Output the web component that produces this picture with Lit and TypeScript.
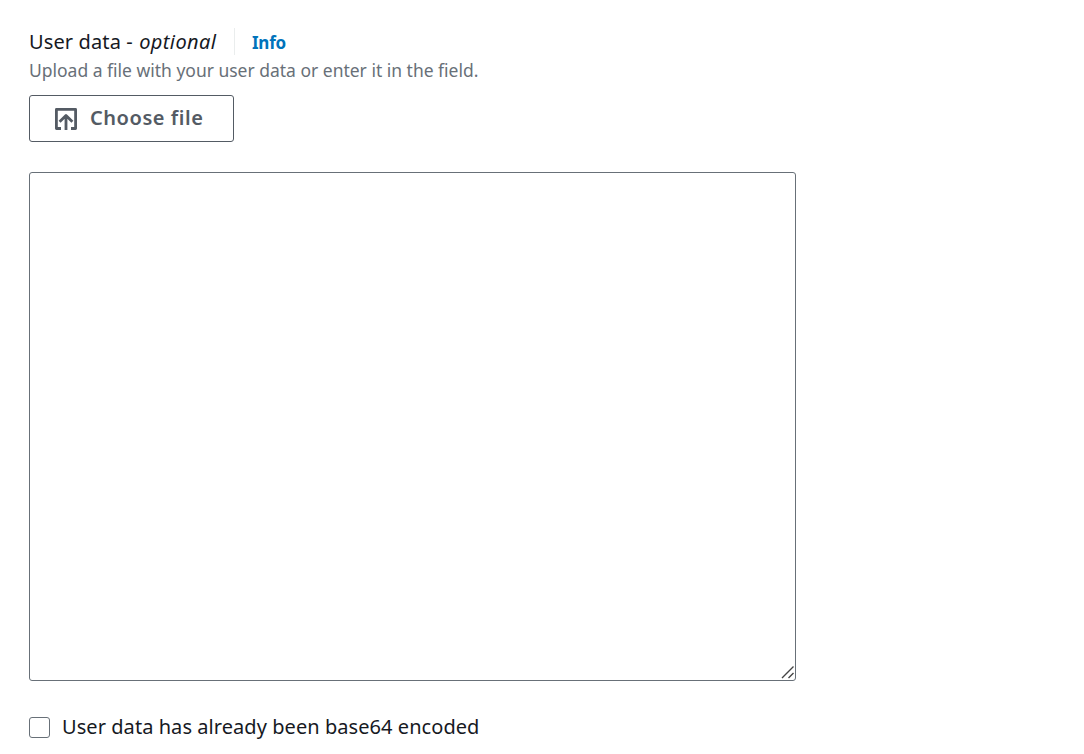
import { LitElement, html, css } from "lit";
import { customElement } from "lit/decorators.js";

@customElement("app-root")
export class AppRoot extends LitElement {
  static styles = css`
    :host {
      display: block;
      box-sizing: border-box;
      height: 754px;
      overflow: hidden;
      padding: 28px 0 0 29px;
      background: #fff;
      color: #16191f;
      font-family: "Noto Sans", "Open Sans", sans-serif;
      font-size: 20px;
      line-height: 28px;
    }
    * { box-sizing: border-box; }
    .heading { display: flex; height: 28px; white-space: pre; }
    .title { width: 205px; letter-spacing: 0.12px; }
    .optional { margin-left: 1px; letter-spacing: 0.4px; }
    .info {
      height: 27px;
      padding-left: 17px;
      border-left: 1px solid #eaeded;
      color: #0073bb;
      font-size: 17px;
      letter-spacing: -0.25px;
      font-weight: 700;
      line-height: 29px;
      text-decoration: none;
    }
    .hint {
      height: 28px;
      color: #687078;
      font-size: 17.5px;
      letter-spacing: -0.01px;
      line-height: 29px;
      white-space: nowrap;
    }
    .choose {
      display: flex;
      align-items: flex-start;
      width: 205px;
      height: 47px;
      margin: 11px 0 30px;
      padding: 0 0 0 25px;
      border: 1px solid #545b64;
      border-radius: 3px;
      background: #fff;
      color: #545b64;
      font: 600 20px/43px "Noto Sans", "Open Sans", sans-serif;
      letter-spacing: 0.55px;
      white-space: nowrap;
    }
    .icon { flex: none; width: 22px; height: 22px; margin: 12px 13px 0 0; }
    .field {
      display: flex;
      align-items: flex-end;
      justify-content: flex-end;
      width: 767px;
      height: 509px;
      border: 1px solid #687078;
      border-radius: 3px;
    }
    .grip { width: 15px; height: 15px; }
    .option { display: flex; align-items: center; height: 28px; margin-top: 32px; letter-spacing: 0.06px; white-space: nowrap; }
    .box {
      width: 21px;
      height: 21px;
      margin: 1px 12px 0 0;
      border: 1px solid #687078;
      border-radius: 3px;
      background: #fff;
    }
  `;

  render() {
    return html`
      <div class="heading"><span class="title">User data - <i class="optional">optional</i></span><a class="info">Info</a></div>
      <div class="hint"><span>Upload a file with your user data or enter it in the field.</span></div>
      <button class="choose">
        <svg class="icon" viewBox="0 0 22 22" fill="none" stroke="currentColor" stroke-width="2.8" stroke-linejoin="round">
          <path d="M6 20.5H1.4V1.4h19.2v19.1H16M11 22V8.5M4.6 13.8L11 7.4l6.4 6.4" />
        </svg>
        <span class="label">Choose file</span>
      </button>
      <div class="field" role="textbox">
        <svg class="grip" viewBox="0 0 15 15" fill="none" stroke="#444" stroke-width="1.4">
          <path d="M2 13L13.5 1.5M8.5 13L13.5 8" />
        </svg>
      </div>
      <label class="option"><span class="box"></span><span class="text">User data has already been base64 encoded</span></label>
    `;
  }
}
